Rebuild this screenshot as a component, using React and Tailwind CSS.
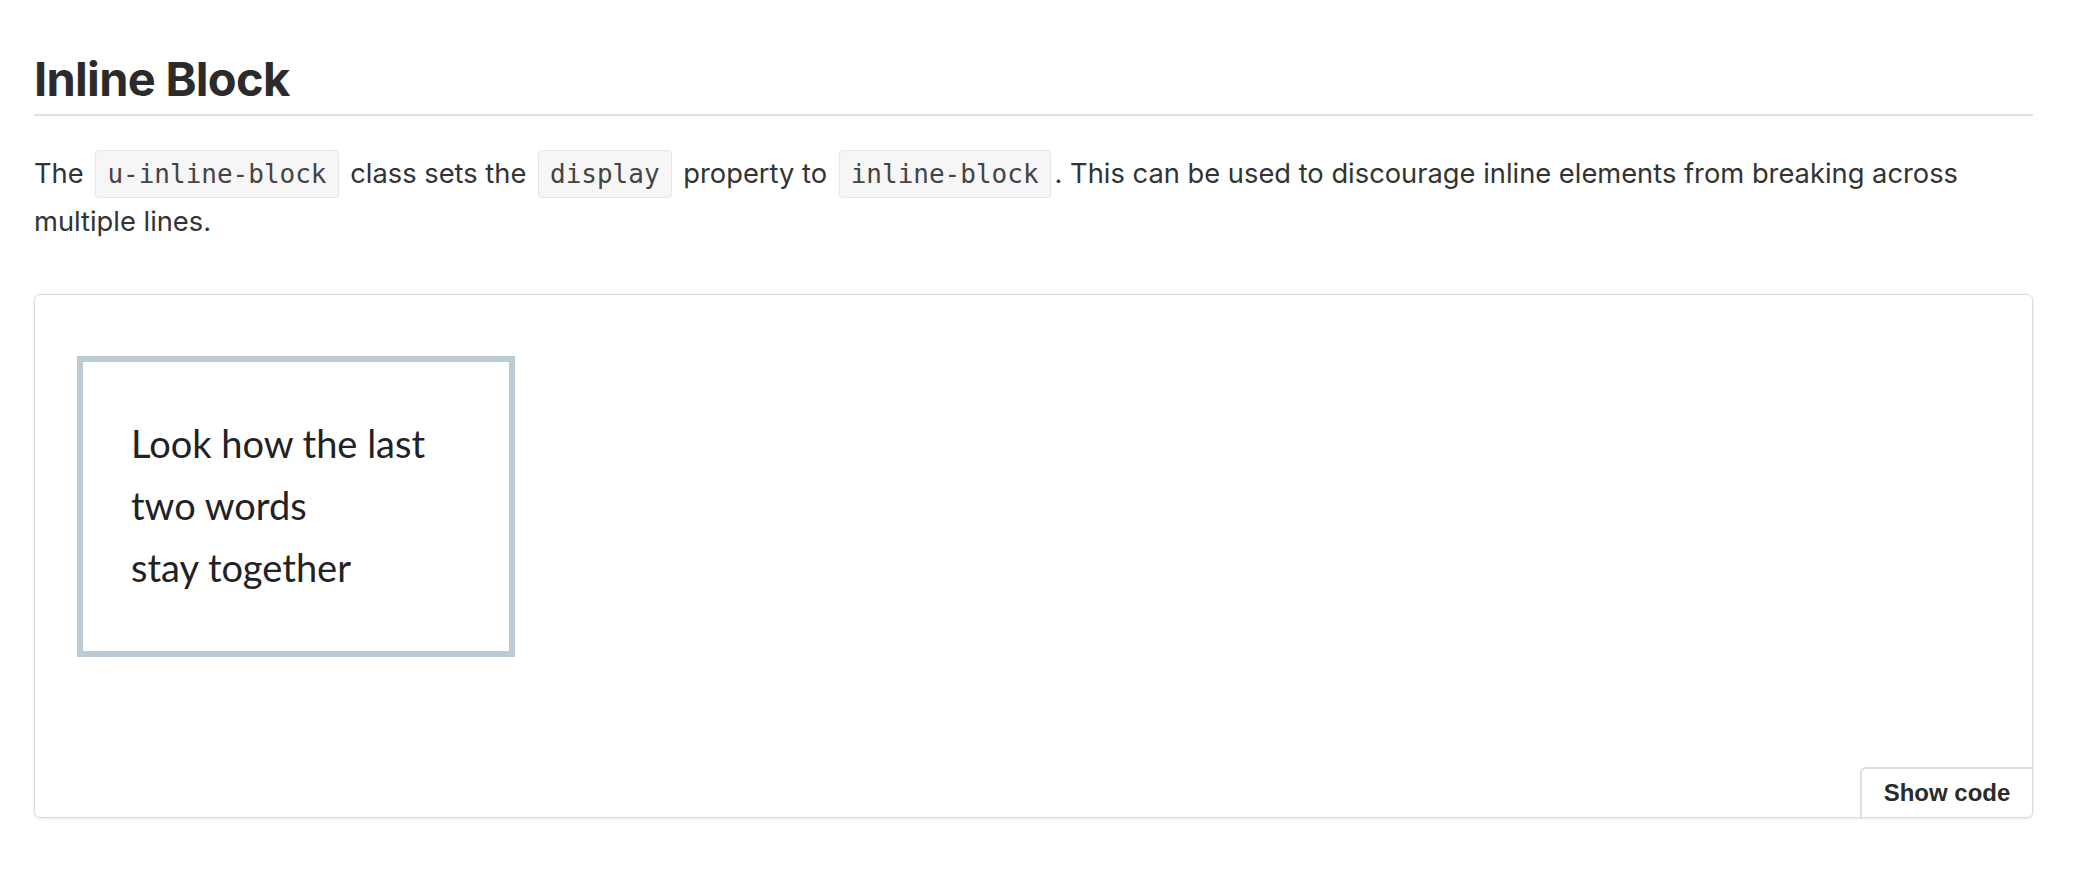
export default function App() {
  const code =
    "inline rounded-[4px] border border-[#e6e6e6] bg-[#f6f6f6] px-[11px] py-[8px] mx-[4px] text-[26px] leading-[30px] text-[#444]";
  const mono = { fontFamily: '"DejaVu Sans Mono", "Liberation Mono", monospace' };
  return (
    <div className="min-h-screen bg-white px-[34px] pt-[51px] pr-[43px]" style={{ fontFamily: 'Inter, "Liberation Sans", sans-serif' }}>
      <h1 className="border-b-2 border-[#e1e1e1] pb-[8px] text-[47px] font-bold leading-[55px] tracking-[-0.7px] text-[#2b2b2b]">
        Inline Block
      </h1>
      <p className="mt-[34px] text-[27.3px] leading-[48px] text-[#333]">
        The{" "}
        <code className={code} style={mono}>u-inline-block</code>{" "}
        class sets the{" "}
        <code className={code} style={mono}>display</code>{" "}
        property to{" "}
        <code className={code} style={mono}>inline-block</code>. This can be used to discourage inline elements from breaking across multiple lines.
      </p>
      <div className="relative mt-[48px] h-[524px] rounded-[6px] border border-[#dcdcdc] bg-white pl-[42px] pt-[61px] shadow-[0_1px_3px_rgba(0,0,0,0.10)]">
        <div className="w-[438px] border-[6px] border-[#bccad4] pl-[48px] pt-[50px] pb-[53px]">
          <p className="text-[38px] leading-[62px] text-[#222]" style={{ fontFamily: 'Lato, "Noto Sans", sans-serif' }}>
            Look how the last
            <br />
            two words
            <br />
            stay together
          </p>
        </div>
        <button
          className="absolute bottom-0 right-0 flex h-[50px] w-[172px] items-center justify-center rounded-tl-[6px] rounded-br-[6px] border-l-2 border-t-2 border-[#dedede] bg-white text-[24px] font-bold text-[#2b2b2b]"
          style={{ fontFamily: '"Liberation Sans", Arial, sans-serif' }}
        >
          Show code
        </button>
      </div>
    </div>
  );
}
